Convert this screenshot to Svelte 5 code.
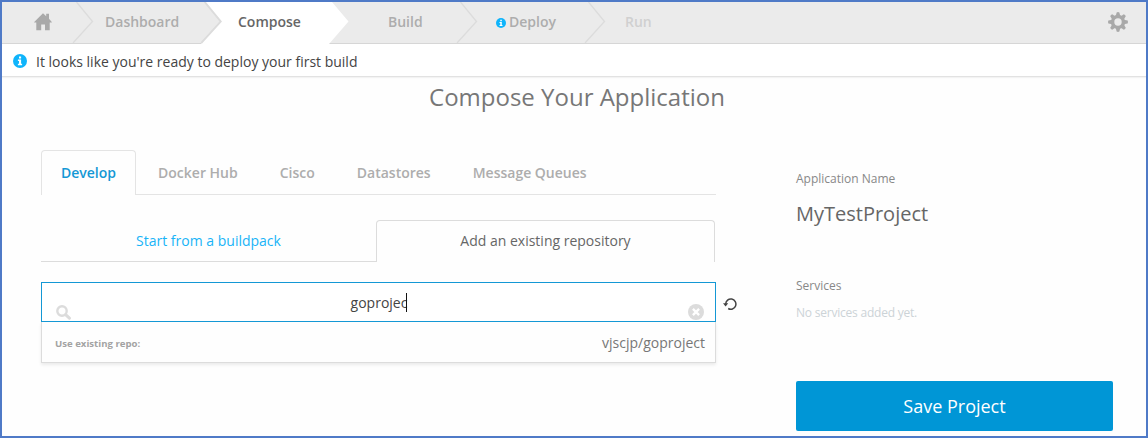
<script>
  const steps = [
    { label: 'Dashboard', pad: 11, width: 128, arrow: true },
    { label: 'Compose', pad: 16, width: 128, active: true },
    { label: 'Build', pad: 38, width: 128, arrow: true },
    { label: 'Deploy', pad: 18, width: 128, info: true, arrow: true },
    { label: 'Run', pad: 19, width: 128, disabled: true }
  ];
  const tabs = ['Develop', 'Docker Hub', 'Cisco', 'Datastores', 'Message Queues'];
  let query = $state('goprojec');
</script>

{#snippet chevron()}
  <svg class="chevron" width="22" height="41" viewBox="0 0 22 41" fill="none">
    <path d="M4.5 0 L20.5 19.5 L1 41" stroke="#dcdcdc" stroke-width="1.3" />
  </svg>
{/snippet}

{#snippet info(size)}
  <svg class="info" width={size} height={size} viewBox="0 0 14 14">
    <circle cx="7" cy="7" r="7" fill="#0fb4fb" />
    <path d="M6 2.4h2.1v2H6zM4.9 5.5h3.2v4.2h1v1.6H4.9V9.7H6V7H4.9z" fill="#fff" />
  </svg>
{/snippet}

<div class="page">
  <nav>
    <div class="step home">
      <svg class="house" width="18" height="18" viewBox="0 0 18 18" fill="#a9a9a9">
        <path d="M9 0.2 L12.2 3.2 V.7 H15 V5.8 L17.8 8.9 V9.6 H15.7 V17.2 H11 V11.4 H7.2 V17.2 H2.3 V9.6 H.2 V8.9Z" />
      </svg>
      {@render chevron()}
    </div>
    {#each steps as step}
      <div class="step" class:active={step.active} class:disabled={step.disabled}
        style="width: {step.width}px; padding-left: {step.pad}px">
        {#if step.active}
          <svg class="fill" width="148" height="42" viewBox="0 0 148 42">
            <path d="M4 0H131L147.5 19.5L128 42H0L20 19.5Z" fill="#fff" />
            <path d="M4 0L20 19.5L.5 41" fill="none" stroke="#dcdcdc" stroke-width="1.5" />
          </svg>
        {/if}
        {#if step.info}{@render info(10)}{/if}
        <span>{step.label}</span>
        {#if step.arrow}{@render chevron()}{/if}
      </div>
    {/each}
    <svg class="gear" width="20" height="20" viewBox="0 0 20 20">
      <g fill="#a9a9a9">
        {#each [0, 45, 90, 135] as angle}
          <path d="M8 3 L8.6 .4 Q10 -.3 11.4 .4 L12 3 V17 L11.4 19.6 Q10 20.3 8.6 19.6 L8 17Z" transform="rotate({angle} 10 10)" />
        {/each}
        <circle cx="10" cy="10" r="7.2" />
      </g>
      <circle cx="10" cy="10" r="3.7" fill="#ebebeb" />
    </svg>
  </nav>

  <div class="notice">
    {@render info(14)}
    <span>It looks like you're ready to deploy your first build</span>
  </div>

  <h1>Compose Your Application</h1>

  <main>
    <section class="builder">
      <div class="tabs">
        {#each tabs as tab, i}
          <div class="tab" class:selected={i === 0}>{tab}</div>
        {/each}
      </div>
      <div class="subtabs">
        <div class="subtab">Start from a buildpack</div>
        <div class="subtab selected">Add an existing repository</div>
      </div>
      <div class="searchrow">
        <div class="search">
          <svg class="lens" width="15" height="15" viewBox="0 0 15 15" fill="none" stroke="#dcdcdc">
            <circle cx="6" cy="6" r="4.7" stroke-width="2.4" />
            <path d="M9.6 9.6 L13.4 13.2" stroke-width="3" stroke-linecap="round" />
          </svg>
          <div class="query">{query}<i class="caret"></i></div>
          <svg class="clear" width="16" height="16" viewBox="0 0 16 16">
            <circle cx="8" cy="8" r="8" fill="#dcdcdc" />
            <path d="M4.9 4.9 L11.1 11.1 M11.1 4.9 L4.9 11.1" stroke="#fff" stroke-width="2.3" />
          </svg>
        </div>
        <svg class="reload" width="14" height="14" viewBox="0 0 14 14">
          <path d="M2.7 7 A5.1 5.1 0 1 1 5.2 11.5" fill="none" stroke="#444" stroke-width="1.5" />
          <path d="M0 6.3 H5.2 L2.6 9.5Z" fill="#444" />
        </svg>
      </div>
      <div class="result">
        <span class="hint">Use existing repo:</span>
        <span class="repo">vjscjp/goproject</span>
      </div>
    </section>

    <aside>
      <div class="caption">Application Name</div>
      <div class="name">MyTestProject</div>
      <div class="caption services">Services</div>
      <div class="empty">No services added yet.</div>
      <button>Save Project</button>
    </aside>
  </main>
</div>

<style>
  .page {
    box-sizing: border-box;
    width: 1148px;
    height: 438px;
    border: 2px solid #4f7ac7;
    background: #fefefe;
    font-family: "Open Sans", sans-serif;
    font-size: 14px;
    color: #666;
    overflow: hidden;
    white-space: nowrap;
  }
  nav {
    display: flex;
    height: 42px;
    box-sizing: border-box;
    border-bottom: 1px solid #d6d6d6;
    background: #ebebeb;
  }
  .step {
    position: relative;
    box-sizing: border-box;
    display: flex;
    align-items: center;
    flex: none;
    height: 41px;
    padding-bottom: 2px;
    font-weight: 600;
    color: #adadad;
  }
  .step span { position: relative; }
  .home { width: 92px; padding-left: 32px; }
  .house { margin-top: 1px; }
  .chevron { position: absolute; right: 0; top: 0; }
  .fill { position: absolute; left: -21px; top: 0; }
  .active { color: #666; }
  .disabled { color: #d0d0d0; }
  .step .info { margin: 3px 3px 0 0; }
  .gear { margin: 10px 18px 0 auto; }
  .notice {
    display: flex;
    align-items: center;
    height: 32px;
    padding: 0 0 0 11px;
    gap: 9px;
    background: #fff;
    border-bottom: 1px solid #e2e2e2;
    box-shadow: 0 1px 1px #f3f3f3;
    color: #444;
  }
  .notice .info { margin-top: 2px; }
  .notice span { margin-top: 2px; }
  h1 {
    margin: 3px 0 0 6px;
    height: 34px;
    line-height: 34px;
    font-size: 24px;
    font-weight: 400;
    text-align: center;
    color: #777;
  }
  main { display: flex; padding: 36px 0 0 39px; }
  .builder { width: 675px; flex: none; }
  .tabs {
    display: flex;
    height: 44px;
    border-bottom: 1px solid #e4e4e4;
  }
  .tab {
    box-sizing: border-box;
    height: 45px;
    padding: 0 21px;
    line-height: 45px;
    font-weight: 600;
    color: #adadad;
  }
  .tab.selected {
    margin-right: 1px;
    padding: 0 19px;
    border: 1px solid #e4e4e4;
    border-bottom: 0;
    border-radius: 4px 4px 0 0;
    background: #fefefe;
    line-height: 44px;
    color: #1498d5;
  }
  .subtabs { display: flex; margin-top: 25px; height: 42px; }
  .subtab {
    box-sizing: border-box;
    width: 335px;
    border-bottom: 1px solid #dcdcdc;
    line-height: 41px;
    text-align: center;
    color: #19b4f7;
  }
  .subtab.selected {
    width: 339px;
    border: 1px solid #dcdcdc;
    border-bottom: 0;
    border-radius: 4px 4px 0 0;
    line-height: 39px;
    color: #666;
  }
  .searchrow { display: flex; margin-top: 20px; width: 700px; }
  .search {
    box-sizing: border-box;
    display: flex;
    width: 675px;
    height: 40px;
    padding: 0 11px 0 14px;
    border: 1px solid #1498d5;
    background: #fff;
  }
  .lens { margin-top: 22px; }
  .clear { margin-top: 21px; }
  .query {
    display: flex;
    justify-content: center;
    flex: 1;
    padding-right: 2px;
    line-height: 39px;
    color: #444;
  }
  .caret { width: 1px; height: 19px; margin: 10px -1px 0 -1px; background: #111; }
  .reload { margin: 15px 0 0 7px; }
  .result {
    box-sizing: border-box;
    display: flex;
    align-items: center;
    justify-content: space-between;
    height: 41px;
    padding: 0 10px 0 13px;
    border: 1px solid #dcdcdc;
    border-top: 0;
    box-shadow: 0 2px 3px rgba(0, 0, 0, .08);
  }
  .hint { font-size: 9.6px; font-weight: 700; color: #a3a3a3; margin-top: 2px; }
  .repo { color: #777; }
  aside { width: 317px; margin-left: 80px; padding-top: 20px; }
  .caption { height: 18px; line-height: 18px; font-size: 12px; color: #888; }
  .name { margin-top: 11px; height: 30px; line-height: 30px; font-size: 20px; color: #666; }
  .services { margin-top: 48px; }
  .empty { margin-top: 9px; height: 18px; line-height: 18px; font-size: 12px; letter-spacing: -.22px; color: #ccd3d7; }
  button {
    display: block;
    width: 317px;
    height: 50px;
    margin: 59px 0 0;
    padding: 0;
    border: 0;
    border-radius: 2px;
    background: #0096d6;
    color: #fff;
    font: 400 18px "Open Sans", sans-serif;
  }
</style>
